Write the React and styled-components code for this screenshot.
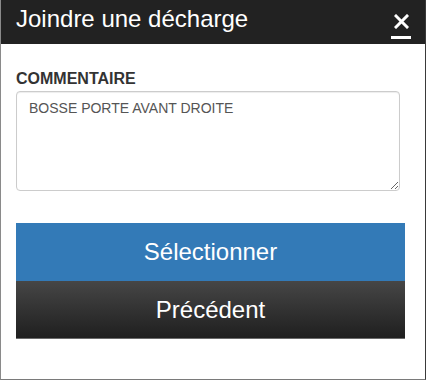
import React from "react";
import styled, { createGlobalStyle } from "styled-components";

const GlobalStyle = createGlobalStyle`
  html, body {
    margin: 0;
    padding: 0;
    background: #fff;
    font-family: "Liberation Sans", Arial, sans-serif;
  }
`;

function App() {
  return (
    <>
      <GlobalStyle />
      <Dialog>
        <Header>
          <Title>Joindre une décharge</Title>
          <CloseButton aria-label="Fermer">
            <svg width="15" height="15" viewBox="0 0 15 15">
              <path
                d="M2 2 L13 13 M13 2 L2 13"
                stroke="#fff"
                strokeWidth="3"
                strokeLinecap="square"
                fill="none"
              />
            </svg>
          </CloseButton>
        </Header>
        <Body>
          <Label htmlFor="commentaire">COMMENTAIRE</Label>
          <Comment id="commentaire" defaultValue="BOSSE PORTE AVANT DROITE" />
          <Actions>
            <ActionButton variant="primary">Sélectionner</ActionButton>
            <ActionButton variant="dark">Précédent</ActionButton>
          </Actions>
        </Body>
      </Dialog>
    </>
  );
}

export default App;

const Dialog = styled.div`
  width: 426px;
  height: 380px;
  box-sizing: border-box;
  border-left: 1px solid #8a8a8a;
  border-right: 1px solid #3a3a3a;
  border-bottom: 1px solid #7a7a7a;
  display: flex;
  flex-direction: column;
  background: #fff;
`;

const Header = styled.header`
  height: 44px;
  flex-shrink: 0;
  background: #222222;
  display: flex;
  align-items: flex-start;
  justify-content: space-between;
  padding: 6px 14px 0 15px;
  box-sizing: border-box;
`;

const Title = styled.h1`
  margin: 0;
  font-size: 24px;
  line-height: 26px;
  font-weight: normal;
  color: #fff;
`;

const CloseButton = styled.button`
  margin-top: 8px;
  width: 20px;
  height: 25px;
  padding: 0;
  border: none;
  border-bottom: 3px solid #fff;
  background: transparent;
  display: flex;
  align-items: flex-start;
  justify-content: center;
  cursor: pointer;

  svg {
    display: block;
  }
`;

const Body = styled.div`
  padding: 26px 19px 0 15px;
  display: flex;
  flex-direction: column;
`;

const Label = styled.label`
  font-size: 16px;
  line-height: 18px;
  font-weight: bold;
  color: #333;
  margin-bottom: 3px;
`;

const Comment = styled.textarea`
  width: 384px;
  height: 100px;
  box-sizing: border-box;
  padding: 6px 12px;
  border: 1px solid #ccc;
  border-radius: 4px;
  box-shadow: inset 0 1px 1px rgba(0, 0, 0, 0.075);
  font-family: "Liberation Sans", Arial, sans-serif;
  font-size: 14px;
  line-height: 20px;
  color: #555;
  resize: vertical;
  outline: none;
`;

const Actions = styled.div`
  margin-top: 32px;
  width: 389px;
  display: flex;
  flex-direction: column;
`;

const ActionButton = styled.button`
  height: 58px;
  border: none;
  padding: 0;
  font-family: "Liberation Sans", Arial, sans-serif;
  font-size: 24px;
  line-height: 26px;
  color: #fff;
  cursor: pointer;
  background: ${(p) =>
    p.variant === "primary"
      ? "#337ab7"
      : "linear-gradient(to bottom, #464646 0%, #1f1f1f 100%)"};
  border-bottom: ${(p) =>
    p.variant === "primary" ? "none" : "1px solid #6a6a6a"};
`;
